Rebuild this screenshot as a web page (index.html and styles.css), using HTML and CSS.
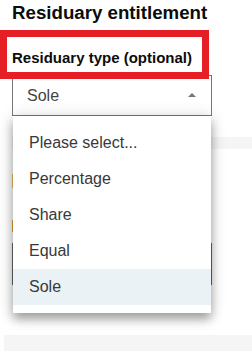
FILE: index.html
```html
<!DOCTYPE html>
<html lang="en">
<head>
    <meta charset="UTF-8">
    <meta name="viewport" content="width=device-width, initial-scale=1.0">
    <title>Residuary entitlement</title>
    <link rel="stylesheet" href="styles.css">
</head>
<body>
    <div class="content">
        <h2>Residuary entitlement</h2>

        <div class="highlight">
            <label for="residuary_type">Residuary type (optional)</label>
        </div>

        <div class="select" id="residuary_type">
            <span class="select-value">Sole</span>
            <span class="select-arrow"></span>

            <ul class="menu">
                <li>Please select...</li>
                <li>Percentage</li>
                <li>Share</li>
                <li>Equal</li>
                <li class="active">Sole</li>
            </ul>
        </div>

        <!-- fields hidden behind the open menu -->
        <div class="band"></div>
        <div class="hint hint-light"></div>
        <div class="hint hint-dark"></div>
        <div class="field"></div>
        <div class="footer-band"></div>
    </div>
</body>
</html>
```

FILE: styles.css
```css
body {
    font-family: 'Liberation Sans', Arial, sans-serif;
    margin: 0;
    background: white;
    color: #0b0c0c;
    overflow: hidden;
}

.content {
    padding-left: 12px;
}

h2 {
    margin: 2px 0 0;
    font-size: 18.7px;
    line-height: 22px;
    font-weight: 700;
}

.highlight {
    position: relative;
    z-index: 2;
    width: 209px;
    margin: 6px 0 -4px -12px;
    padding: 11px 5px 4px;
    border: 7px solid #e61e25;
    background: white;
    box-sizing: border-box;
}

label {
    display: block;
    font-size: 15px;
    line-height: 20px;
    font-weight: 700;
}

.select {
    position: relative;
    z-index: 1;
    width: 200px;
    height: 41px;
    border: 1px solid #777;
    box-sizing: border-box;
    background: white;
}

.select-value {
    display: block;
    padding-left: 14px;
    font-size: 16px;
    line-height: 39px;
    color: #444;
}

.select-arrow {
    position: absolute;
    top: 17px;
    right: 15px;
    width: 0;
    height: 0;
    border-left: 4px solid transparent;
    border-right: 4px solid transparent;
    border-bottom: 4px solid #757575;
}

.menu {
    position: absolute;
    top: 40px;
    left: 0;
    right: 0;
    margin: 0;
    padding: 9px 0 8px;
    list-style: none;
    background: white;
    box-shadow: 0 6px 10px rgba(0, 0, 0, 0.35), 0 0 16px rgba(0, 0, 0, 0.12);
}

.menu li {
    height: 36px;
    padding-left: 16px;
    font-size: 16px;
    line-height: 36px;
    color: #383838;
}

.menu li.active {
    background: #eaf2f5;
}

.band {
    margin-top: 21px;
    height: 12px;
    background: #f5f5f5;
}

.hint {
    height: 14px;
    border-left: 2px solid #f2c066;
}

.hint-light {
    margin-top: 25px;
}

.hint-dark {
    margin-top: 32px;
    height: 12px;
    border-left-color: #eea03a;
}

.field {
    margin-top: 11px;
    width: 200px;
    height: 42px;
    border: 1px solid #666;
    box-sizing: border-box;
}

.footer-band {
    margin: 50px 0 0 -8px;
    height: 16px;
    background: #f5f5f5;
}
```
